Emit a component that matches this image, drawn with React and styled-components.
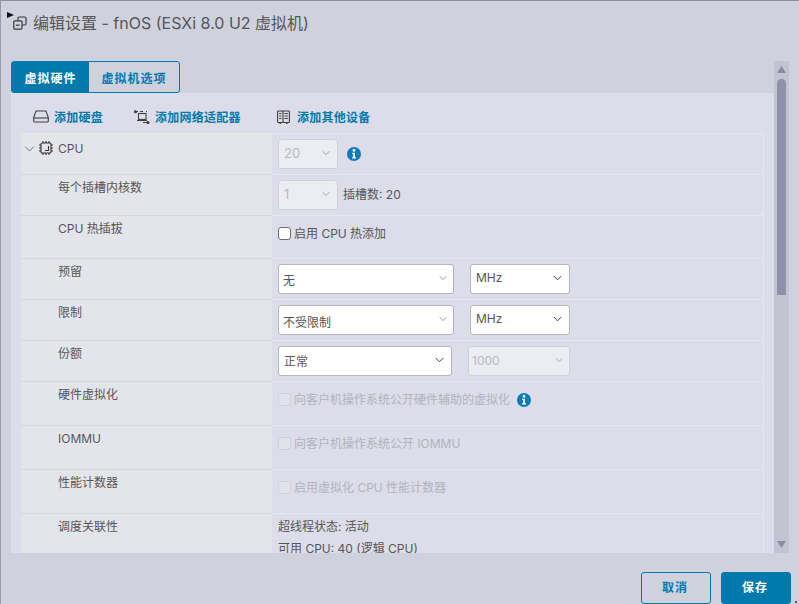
import React from 'react';
import styled, { createGlobalStyle } from 'styled-components';

const Global = createGlobalStyle`
  html, body { margin: 0; padding: 0; background: #cfd1dd; }
  * { box-sizing: border-box; }
`;
const FONT = `Inter, "Noto Sans CJK SC", "Noto Sans", sans-serif`;
const BLUE = '#0079ad';

const Modal = styled.div`
  position: relative; width: 799px; height: 604px; overflow: hidden;
  display: flex; flex-direction: column;
  background: #cfd1dd; font-family: ${FONT}; color: #565656; font-size: 12px;
  border-top: 1px solid #8e8f9e; border-left: 1px solid #9a9baa;
`;
const Header = styled.header`
  height: 60px; flex: none; display: flex; align-items: flex-start; gap: 6px;
  padding: 14px 0 0 12px;
`;
const Title = styled.h1`
  margin: 0; font-size: 16px; font-weight: 400; line-height: 17px; color: #565656;
`;
const Pointer = styled.svg`position: absolute; left: 6px; top: 11px;`;
const Body = styled.div`
  height: 492px; flex: none; display: flex; padding-left: 10px; padding-right: 9px;
`;
const Scrollable = styled.div`
  width: 763px; flex: none; display: flex; flex-direction: column; overflow: hidden;
`;
const Tabs = styled.div`
  display: flex; flex: none; width: 169px; height: 32px;
  border: 1px solid ${BLUE}; border-radius: 3px;
`;
const Tab = styled.div`
  display: flex; align-items: center; justify-content: center;
  width: ${p => p.$w}px; font-size: 12px; font-weight: 700; letter-spacing: 1px;
  color: ${p => (p.$active ? '#fff' : BLUE)};
  background: ${p => (p.$active ? BLUE : 'transparent')};
`;
const Panel = styled.div`
  flex: 1; min-height: 0; overflow: hidden; background: #dcdde8; padding: 0 10px;
`;
const Toolbar = styled.div`
  height: 40px; display: flex; align-items: center; padding: 7px 0 0 12px;
`;
const ToolItem = styled.div`
  display: flex; align-items: center; gap: ${p => p.$gap}px; width: ${p => p.$w}px;
  font-size: 12px; font-weight: 700; color: ${BLUE}; letter-spacing: .25px;
`;
const Table = styled.div`
  border-top: 1px solid #e6e7ee; border-right: 1px solid #e6e7ee;
`;
const Row = styled.div`
  display: grid; grid-template-columns: 251px 1fr; height: ${p => p.$h}px;
`;
const Label = styled.div`
  background: #e4e5eb; border-bottom: 1px solid #d6d7df; padding: ${p => (p.$head ? 6 : 4)}px 0 0 37px;
  line-height: 17px; display: flex; align-items: flex-start; color: #565656; position: relative;
`;
const CpuHead = styled.div`
  position: absolute; left: 3px; top: 7px; display: flex; align-items: center; gap: 4px;
`;
const TreeToggle = styled.span`
  display: flex; position: relative; top: 1px;
`;
const Value = styled.div`
  border-bottom: 1px solid #e6e7ee; padding: ${p => p.$pad ?? 5}px 0 0 6px;
  display: flex; align-items: flex-start; min-width: 0;
`;
const Select = styled.div`
  display: flex; align-items: center; justify-content: space-between; flex: none;
  width: ${p => p.$w}px; height: 30px; margin-left: ${p => p.$ml ?? 0}px;
  padding: 0 ${p => p.$pr ?? 7}px 2px ${p => p.$pl ?? 5}px;
  background: ${p => (p.$off ? '#ecedf2' : '#fff')};
  border: 1px solid ${p => (p.$off ? '#d0d1d8' : '#b5b5bc')}; border-radius: 3px;
  color: ${p => (p.$off ? '#b9b9c0' : '#565656')};
  font-size: ${p => p.$fs ?? 12}px;
  line-height: 16px;
`;
const SelectText = styled.span`
  position: relative; top: ${p => p.$dy ?? 0}px;
`;
const Inline = styled.span`
  margin-left: ${p => p.$ml ?? 0}px; line-height: 30px; white-space: nowrap; color: #565656;
`;
const Check = styled.label`
  display: flex; align-items: flex-start; gap: 3px; white-space: nowrap;
  color: ${p => (p.$off ? '#b2b3bd' : '#565656')}; line-height: 16px;
`;
const Box = styled.span`
  width: 13px; height: 13px; flex: none; border-radius: 3px; margin-top: 1px;
  border: 1px solid ${p => (p.$off ? '#cfd0d9' : '#6d6d75')};
  background: ${p => (p.$off ? '#e2e3ea' : '#fff')};
`;
const Info = styled.svg`flex: none; margin-left: ${p => p.$ml}px; margin-top: ${p => p.$mt}px;`;
const Stack = styled.div`display: flex; flex-direction: column; gap: 6px; line-height: 16px; color: #565656;`;
const Scrollbar = styled.div`
  width: 15px; flex: none; background: #c3c4d1; display: flex; flex-direction: column;
  align-items: center; padding-top: 5px; padding-bottom: 5px;
`;
const Thumb = styled.div`
  width: 9px; height: 216px; margin-top: 6px; border-radius: 5px 5px 0 0; background: #8f90a9; flex: none;
`;
const Spacer = styled.div`flex: 1;`;
const Footer = styled.footer`
  flex: 1; display: flex; justify-content: flex-end; align-items: flex-start; gap: 10px;
  padding: 19px 8px 0 0;
`;
const Button = styled.div`
  width: 70px; height: 32px; display: flex; align-items: center; justify-content: center;
  padding: 0 2px 3px 0;
  border: 1px solid ${BLUE}; border-radius: 3px; font-size: 12px; font-weight: 700; letter-spacing: 1px;
  color: ${p => (p.$primary ? '#fff' : BLUE)}; background: ${p => (p.$primary ? BLUE : 'transparent')};
`;
const Grip = styled.div`
  position: absolute; right: 2px; bottom: 1px; width: 2px; height: 2px; background: #55566a;
`;

const Chevron = ({ color = '#555', w = 10, sw = 1.1 }) => (
  <svg width={w} height="6" viewBox="0 0 10 6" fill="none">
    <path d="M.8.8 5 5 9.2.8" stroke={color} strokeWidth={sw} />
  </svg>
);
const InfoIcon = ({ ml, mt }) => (
  <Info $ml={ml} $mt={mt} width="14" height="14" viewBox="0 0 14 14">
    <circle cx="7" cy="7" r="7" fill="#0a7cba" />
    <circle cx="7" cy="3.4" r="1.4" fill="#fff" />
    <path d="M5.2 5.800H8v4.400h1v1.300H5.100v-1.300h1V7.100h-.9z" fill="#fff" />
  </Info>
);
const Arrow = ({ down }) => (
  <svg width="9" height="7" viewBox="0 0 9 7">
    <path d={down ? 'M0 0h9L4.500 7z' : 'M4.500 0 9 7H0z'} fill="#8a8ba4" />
  </svg>
);

export default function App() {
  return (
    <Modal>
      <Global />
      <Pointer width="7" height="6" viewBox="0 0 7 6"><path d="M0 0l7 3-7 3z" fill="#111" /></Pointer>
      <Header>
        <svg width="14" height="14" viewBox="0 0 14 14" fill="none" stroke="#3a3a3a" strokeWidth="1.2" style={{ marginTop: 1 }}>
          <rect x="5" y="1" width="8" height="8" rx="1.200" />
          <rect x=".8" y="4.800" width="8.200" height="8.400" rx="1.200" fill="#cfd1dd" />
          <path d="M3 9.200h3.600" />
        </svg>
        <Title>编辑设置 - fnOS (ESXi 8.0 U2 虚拟机)</Title>
      </Header>
      <Body>
        <Scrollable>
          <Tabs>
            <Tab $active $w={77}>虚拟硬件</Tab>
            <Tab $w={90}>虚拟机选项</Tab>
          </Tabs>
          <Panel>
            <Toolbar>
              <ToolItem $w={101} $gap={5}>
                <svg width="16" height="13" viewBox="0 0 16 13" fill="none" stroke="#3f3f3f" strokeWidth="1.100">
                  <path d="M3 1h10l2.300 6.500V11a1 1 0 0 1-1 1H1.700a1 1 0 0 1-1-1V7.500z" />
                  <path d="M.8 8h14.400" />
                </svg>
                添加硬盘
              </ToolItem>
              <ToolItem $w={143} $gap={5}>
                <svg width="16" height="14" viewBox="0 0 16 14" fill="none" stroke="#3f3f3f" strokeWidth="1.100">
                  <rect x="4.500" y="3.500" width="7.500" height="6" />
                  <path d="M3 10.500h10M1 1.500h3M6 1.500h3M12 1.500h1M9 12.500h5" />
                  <circle cx="1.500" cy="1.800" r="1" fill="#3f3f3f" />
                  <circle cx="14" cy="12.500" r="1" fill="#3f3f3f" />
                </svg>
                添加网络适配器
              </ToolItem>
              <ToolItem $gap={7}>
                <svg width="13" height="14" viewBox="0 0 13 14" fill="none" stroke="#3f3f3f" strokeWidth="1.100">
                  <rect x=".6" y="1" width="11.800" height="11.500" rx=".8" />
                  <path d="M6 1v11.500M2.200 3.500h2.200M2.200 6h2.200M2.200 8.500h2.200M7.500 3.500h3.400M7.500 6h3.400M7.500 8.500h3.400M2.500 13.500h1.500M9 13.500h1.500" />
                </svg>
                添加其他设备
              </ToolItem>
            </Toolbar>
            <Table>
              <Row $h={41}>
                <Label $head>
                  <CpuHead>
                    <TreeToggle><Chevron color="#666" w={11} sw={0.9} /></TreeToggle>
                    <svg width="14" height="14" viewBox="0 0 14 14" fill="none" stroke="#333" strokeWidth="1.100" style={{ flex: 'none' }}>
                      <rect x="2" y="2" width="10" height="10" rx="1.200" />
                      <path d="M4 0v2M7 0v2M10 0v2M4 12v2M7 12v2M10 12v2M0 4h2M0 7h2M0 10h2M12 4h2M12 7h2M12 10h2M9.500 5v4.500H6" />
                    </svg>
                  </CpuHead>
                  CPU
                </Label>
                <Value>
                  <Select $w={60} $off $fs={13}><SelectText>20</SelectText><Chevron color="#9a9aa2" w={8} /></Select>
                  <InfoIcon ml={9} mt={8} />
                </Value>
              </Row>
              <Row $h={41}>
                <Label>每个插槽内核数</Label>
                <Value>
                  <Select $w={60} $off $fs={13}><SelectText>1</SelectText><Chevron color="#9a9aa2" w={8} /></Select>
                  <Inline $ml={5}>插槽数: 20</Inline>
                </Value>
              </Row>
              <Row $h={43}>
                <Label>CPU 热插拔</Label>
                <Value $pad={10}>
                  <Check><Box />启用 CPU 热添加</Check>
                </Value>
              </Row>
              <Row $h={41}>
                <Label>预留</Label>
                <Value>
                  <Select $w={176} $pl={4} $pr={6}><SelectText $dy={3}>无</SelectText><Chevron color="#8a8a90" w={8} /></Select>
                  <Select $w={100} $ml={16} $pr={7}><SelectText>MHz</SelectText><Chevron color="#444" w={9} /></Select>
                </Value>
              </Row>
              <Row $h={41}>
                <Label>限制</Label>
                <Value>
                  <Select $w={176} $pl={4} $pr={6}><SelectText $dy={4}>不受限制</SelectText><Chevron color="#8a8a90" w={8} /></Select>
                  <Select $w={100} $ml={16} $pr={7}><SelectText>MHz</SelectText><Chevron color="#444" w={9} /></Select>
                </Value>
              </Row>
              <Row $h={41}>
                <Label>份额</Label>
                <Value>
                  <Select $w={174} $pl={5} $pr={7}><SelectText $dy={2}>正常</SelectText><Chevron color="#444" w={9} /></Select>
                  <Select $w={102} $ml={16} $off $pl={3} $pr={6}><SelectText $dy={1}>1000</SelectText><Chevron color="#a5a5ad" w={8} /></Select>
                </Value>
              </Row>
              <Row $h={44}>
                <Label>硬件虚拟化</Label>
                <Value $pad={10}>
                  <Check $off><Box $off />向客户机操作系统公开硬件辅助的虚拟化</Check>
                  <InfoIcon ml={7} mt={1} />
                </Value>
              </Row>
              <Row $h={44}>
                <Label>IOMMU</Label>
                <Value $pad={10}>
                  <Check $off><Box $off />向客户机操作系统公开 IOMMU</Check>
                </Value>
              </Row>
              <Row $h={44}>
                <Label>性能计数器</Label>
                <Value $pad={10}>
                  <Check $off><Box $off />启用虚拟化 CPU 性能计数器</Check>
                </Value>
              </Row>
              <Row $h={60}>
                <Label>调度关联性</Label>
                <Value $pad={5}>
                  <Stack>
                    <span>超线程状态: 活动</span>
                    <span>可用 CPU: 40 (逻辑 CPU)</span>
                  </Stack>
                </Value>
              </Row>
            </Table>
          </Panel>
        </Scrollable>
        <Scrollbar>
          <Arrow />
          <Thumb />
          <Spacer />
          <Arrow down />
        </Scrollbar>
      </Body>
      <Footer>
        <Button>取消</Button>
        <Button $primary>保存</Button>
      </Footer>
      <Grip />
    </Modal>
  );
}
